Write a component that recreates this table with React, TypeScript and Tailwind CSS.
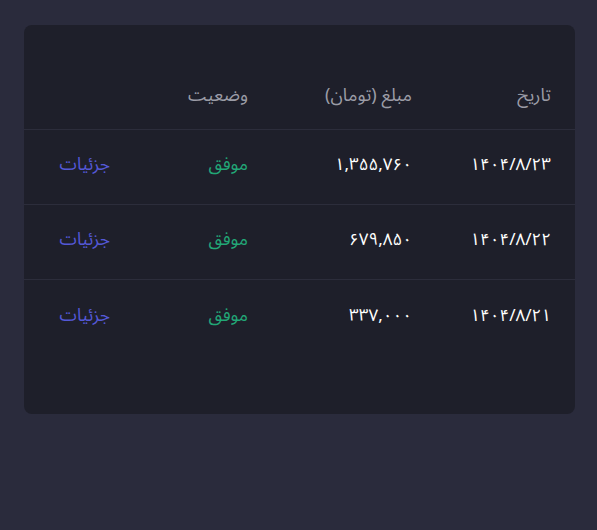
import React from "react";

const rows = [
  { date: "۱۴۰۴/۸/۲۳", amount: "۱,۳۵۵,۷۶۰" },
  { date: "۱۴۰۴/۸/۲۲", amount: "۶۷۹,۸۵۰" },
  { date: "۱۴۰۴/۸/۲۱", amount: "۳۳۷,۰۰۰" },
];

export default function App() {
  return (
    <div
      dir="rtl"
      className="w-[597px] h-[530px] bg-[#2a2b3c] pt-[25px] px-[22px]"
      style={{ fontFamily: '"Noto Sans Arabic", "DejaVu Sans", sans-serif' }}
    >
      <div className="w-[551px] ml-auto mr-0 bg-[#1e1f2a] rounded-lg h-[389px]">
        <div className="grid grid-cols-[139px_164px_138px_110px] h-[105px] items-end pb-[22px] border-b border-[#2c2d3b] text-[18px] leading-6 text-[#9b9ca6]">
          <div className="pr-6">تاریخ</div>
          <div className="pr-6">مبلغ (تومان)</div>
          <div className="pr-6">وضعیت</div>
          <div className="pr-6"></div>
        </div>
        {rows.map((r, i) => (
          <div
            key={i}
            className={`grid grid-cols-[139px_164px_138px_110px] h-[75px] items-center pb-[4px] leading-6 ${
              i < rows.length - 1 ? "border-b border-[#2c2d3b]" : ""
            }`}
          >
            <div className="pr-6 text-white text-[17px]">{r.date}</div>
            <div className="pr-6 text-white text-[17px]">{r.amount}</div>
            <div className="pr-6 text-[#22a777] text-[17.5px]">موفق</div>
            <div className="pr-6 text-[#5458d6] text-[17.5px]">جزئیات</div>
          </div>
        ))}
      </div>
    </div>
  );
}
